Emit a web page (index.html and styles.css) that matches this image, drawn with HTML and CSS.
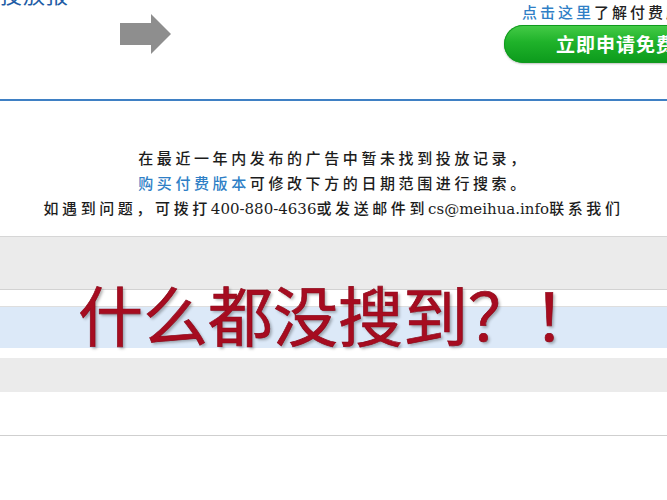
FILE: index.html
```html
<!DOCTYPE html>
<html lang="zh-CN">
<head>
<meta charset="utf-8">
<title>搜索结果</title>
<link rel="stylesheet" href="styles.css">
</head>
<body>
<div class="page">
  <header class="header">
    <div class="left">
      <div class="title">投放报</div>
      <svg class="arrow" width="52" height="40" viewBox="0 0 52 40">
        <path d="M0 9 H31 V0 L51 20 L31 40 V31 H0 Z" fill="#8e8e8e"/>
      </svg>
    </div>
    <div class="right">
      <div class="promo"><a class="link">点击这里</a>了解付费版本</div>
      <div class="btn">立即申请免费试用</div>
    </div>
  </header>

  <section class="notice">
    <p class="line">在最近一年内发布的广告中暂未找到投放记录，</p>
    <p class="line"><a class="link">购买付费版本</a>可修改下方的日期范围进行搜索。</p>
    <p class="line">如遇到问题，可拨打<span class="latin">400-880-4636</span>或发送邮件到<span class="latin">cs@meihua.info</span>联系我们</p>
  </section>

  <div class="rows">
    <div class="row gray r1"></div>
    <div class="row white r2"></div>
    <div class="row blue r3"></div>
    <div class="row white r4"></div>
    <div class="row gray r5"></div>
    <div class="row white r6"></div>
    <div class="overlay">什么都没搜到？！</div>
  </div>
</div>
</body>
</html>
```

FILE: styles.css
```css
html, body {
  margin: 0;
  padding: 0;
  background: #ffffff;
  overflow: hidden;
}

.page {
  width: 667px;
  height: 500px;
  overflow: hidden;
  font-family: "Noto Sans CJK SC", "Noto Sans", sans-serif;
}

.header {
  height: 99px;
  border-bottom: 2px solid #3f80c4;
  display: flex;
  justify-content: space-between;
}

.left {
  display: flex;
  flex-direction: column;
}

.title {
  margin-top: -19px;
  height: 24px;
  line-height: 24px;
  font-size: 22px;
  font-weight: 400;
  color: #1f5da6;
  letter-spacing: 1px;
}

.arrow {
  margin-left: 120px;
  margin-top: 9px;
}

.right {
  width: 163px;
  display: flex;
  flex-direction: column;
}

.promo {
  margin-top: 3px;
  margin-left: 18px;
  height: 18px;
  line-height: 18px;
  font-size: 15px;
  font-weight: 500;
  letter-spacing: 3px;
  white-space: nowrap;
  color: #222222;
}

.link {
  color: #2f7fc6;
}

.btn {
  margin-top: 4px;
  width: 200px;
  height: 38px;
  border-radius: 19px;
  background: linear-gradient(#46cc48 0%, #1fb22a 45%, #0c9a1c 100%);
  box-shadow: inset 0 0 0 1px #109a1e, 0 1px 2px rgba(0, 0, 0, 0.25);
  color: #ffffff;
  font-size: 19px;
  font-weight: 700;
  line-height: 38px;
  padding-left: 52px;
  letter-spacing: 1px;
  white-space: nowrap;
  box-sizing: border-box;
}

.notice {
  padding-top: 44px;
  margin-bottom: 16px;
  text-align: center;
  color: #1c1c1c;
  font-size: 15px;
  font-weight: 500;
  letter-spacing: 3.6px;
}

.line {
  margin: 0;
  height: 25px;
  line-height: 25px;
  white-space: nowrap;
}

.latin {
  font-family: "DejaVu Serif", "Liberation Serif", serif;
  font-size: 15px;
  font-weight: 400;
  letter-spacing: 0;
}

.rows {
  position: relative;
  border-top: 1px solid #d6d6d6;
  border-bottom: 1px solid #cfcfcf;
}

.row.gray { background: #ebebeb; }
.row.white { background: #ffffff; }
.row.blue { background: #dce9f8; }

.r1 { height: 52px; border-bottom: 1px solid #d2d2d2; }
.r2 { height: 16px; border-bottom: 1px solid #dedede; }
.r3 { height: 41px; }
.r4 { height: 10px; }
.r5 { height: 34px; }
.r6 { height: 43px; }

.overlay {
  position: absolute;
  left: 78px;
  top: 44px;
  font-family: "Noto Sans CJK SC", sans-serif;
  font-size: 65px;
  font-weight: 400;
  line-height: 65px;
  color: #a60c20;
  -webkit-text-stroke: 0.7px #8e0819;
  white-space: nowrap;
  text-shadow: 2px 2px 3px rgba(0, 0, 0, 0.3);
}
```
